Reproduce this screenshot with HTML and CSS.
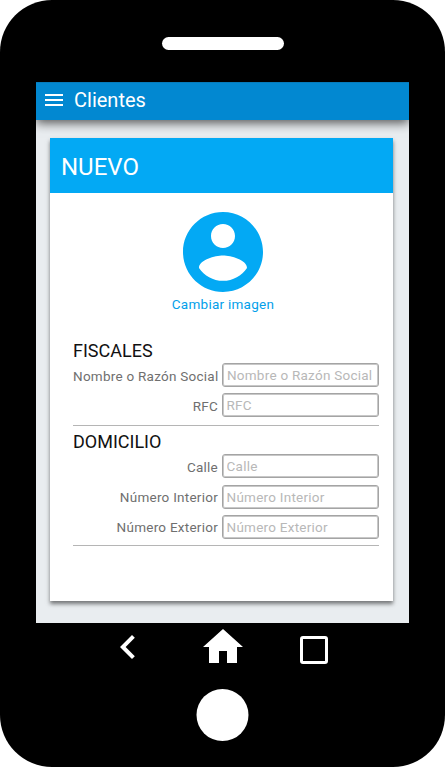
FILE: index.html
```html
<!DOCTYPE html>
<html lang="es">
<head>
<meta charset="utf-8">
<title>Clientes</title>
<link rel="stylesheet" href="styles.css">
</head>
<body>
<div class="phone">
  <div class="speaker"></div>
  <div class="screen">
    <header class="appbar">
      <svg class="menu" viewBox="0 0 24 24"><path d="M3 18h18v-2H3v2zm0-5h18v-2H3v2zm0-7v2h18V6H3z"/></svg>
      <span class="title">Clientes</span>
    </header>
    <main class="card">
      <h1 class="card-head">NUEVO</h1>
      <div class="photo">
        <svg class="avatar" viewBox="2 2 20 20"><path d="M12 2C6.480 2 2 6.480 2 12s4.480 10 10 10 10-4.480 10-10S17.520 2 12 2zm0 3c1.660 0 3 1.340 3 3s-1.340 3-3 3-3-1.340-3-3 1.340-3 3-3zm0 14.200c-2.500 0-4.710-1.280-6-3.220.030-1.990 4-3.080 6-3.080 1.990 0 5.970 1.090 6 3.080-1.290 1.940-3.500 3.220-6 3.220z"/></svg>
        <a class="change">Cambiar imagen</a>
      </div>
      <section class="group fiscal">
        <h2>FISCALES</h2>
        <label class="row"><span>Nombre o Razón Social</span><input placeholder="Nombre o Razón Social"></label>
        <label class="row"><span>RFC</span><input placeholder="RFC"></label>
      </section>
      <section class="group address">
        <h2>DOMICILIO</h2>
        <label class="row first"><span>Calle</span><input placeholder="Calle"></label>
        <label class="row raised"><span>Número Interior</span><input placeholder="Número Interior"></label>
        <label class="row raised"><span>Número Exterior</span><input placeholder="Número Exterior"></label>
      </section>
    </main>
  </div>
  <nav class="nav">
    <svg viewBox="0 0 24 24"><path d="M15.410 7.410L14 6l-6 6 6 6 1.410-1.410L10.830 12z"/></svg>
    <svg viewBox="0 0 24 24"><path d="M10 20v-6h4v6h5v-8h3L12 3 2 12h3v8z"/></svg>
    <span class="recent"></span>
  </nav>
  <svg class="home-button" viewBox="0 0 53 52"><circle cx="26.500" cy="26" r="26"/></svg>
</div>
</body>
</html>
```
FILE: styles.css
```css
* { box-sizing: border-box; }
body { margin: 0; background: #fff; font-family: Roboto, sans-serif; overflow: hidden; }
svg { display: block; fill: #fff; }
h1, h2 { margin: 0; font-weight: 400; }

.phone { width: 445px; height: 767px; background: #000; border-radius: 52px; padding: 37px 36px 0; }
.speaker { width: 122px; height: 13px; margin: 0 0 32px 125.600px; border-radius: 7px; background: #fff; }
.screen { width: 373px; height: 541px; background: #e9edf0; overflow: hidden; }

.appbar { display: flex; align-items: center; height: 38px; padding-left: 6px; background: #0288d1; border-top: 1px solid #067bbb; box-shadow: 0 3px 10px rgba(0, 0, 0, .65); }
.menu { width: 24px; height: 24px; margin-top: -4px; }
.title { margin: -4px 0 0 8px; font-size: 20px; line-height: 24px; color: #fff; }

.card { width: 343px; height: 463px; margin: 18px 0 0 14px; background: #fff; box-shadow: 0 3px 4px rgba(0, 0, 0, .5); position: relative; }
.card-head { height: 55px; padding: 2px 0 0 11px; background: #03a9f4; color: #fff; font-size: 24px; line-height: 55px; }

.photo { display: flex; flex-direction: column; align-items: center; padding: 19px 0 0 3px; }
.avatar { width: 80px; height: 80px; fill: #03a9f4; }
.change { margin-top: 4px; font-size: 13.500px; letter-spacing: .26px; line-height: 16px; color: #03a0ea; }

.group { width: 306px; margin-left: 23px; border-bottom: 1px solid #b5b5b5; }
.fiscal { height: 87px; margin-top: 27px; }
.address { height: 120px; padding-top: 4px; }
.group h2 { font-size: 18px; line-height: 24px; color: #111; }
.row { display: flex; align-items: center; height: 24px; margin-bottom: 6px; font-size: 13.500px; letter-spacing: .25px; }
.first { margin-bottom: 7px; }
.row span { flex: 1; text-align: right; padding: 2px 4px 0 0; color: #6f6f6f; white-space: nowrap; }
.raised span { padding-top: 0; }
.row input { flex: none; width: 157px; height: 24px; padding: 0 0 0 3.500px; border: 1px solid #a4a4a4; border-radius: 3px; box-shadow: inset 0 0 0 1px #c8c8c8; background: #fff; font: inherit; letter-spacing: inherit; outline: 0; }
.row input::placeholder { color: #b8b8b8; opacity: 1; }

.nav { display: flex; height: 48px; padding-left: 68px; }
.nav svg { width: 48px; height: 48px; margin-right: 47px; }
.recent { width: 28px; height: 28px; margin: 13px 0 0 6px; border: 3px solid #fff; border-radius: 3px; }
.home-button { width: 53px; height: 52px; margin: 18px 0 0 160px; }
```
